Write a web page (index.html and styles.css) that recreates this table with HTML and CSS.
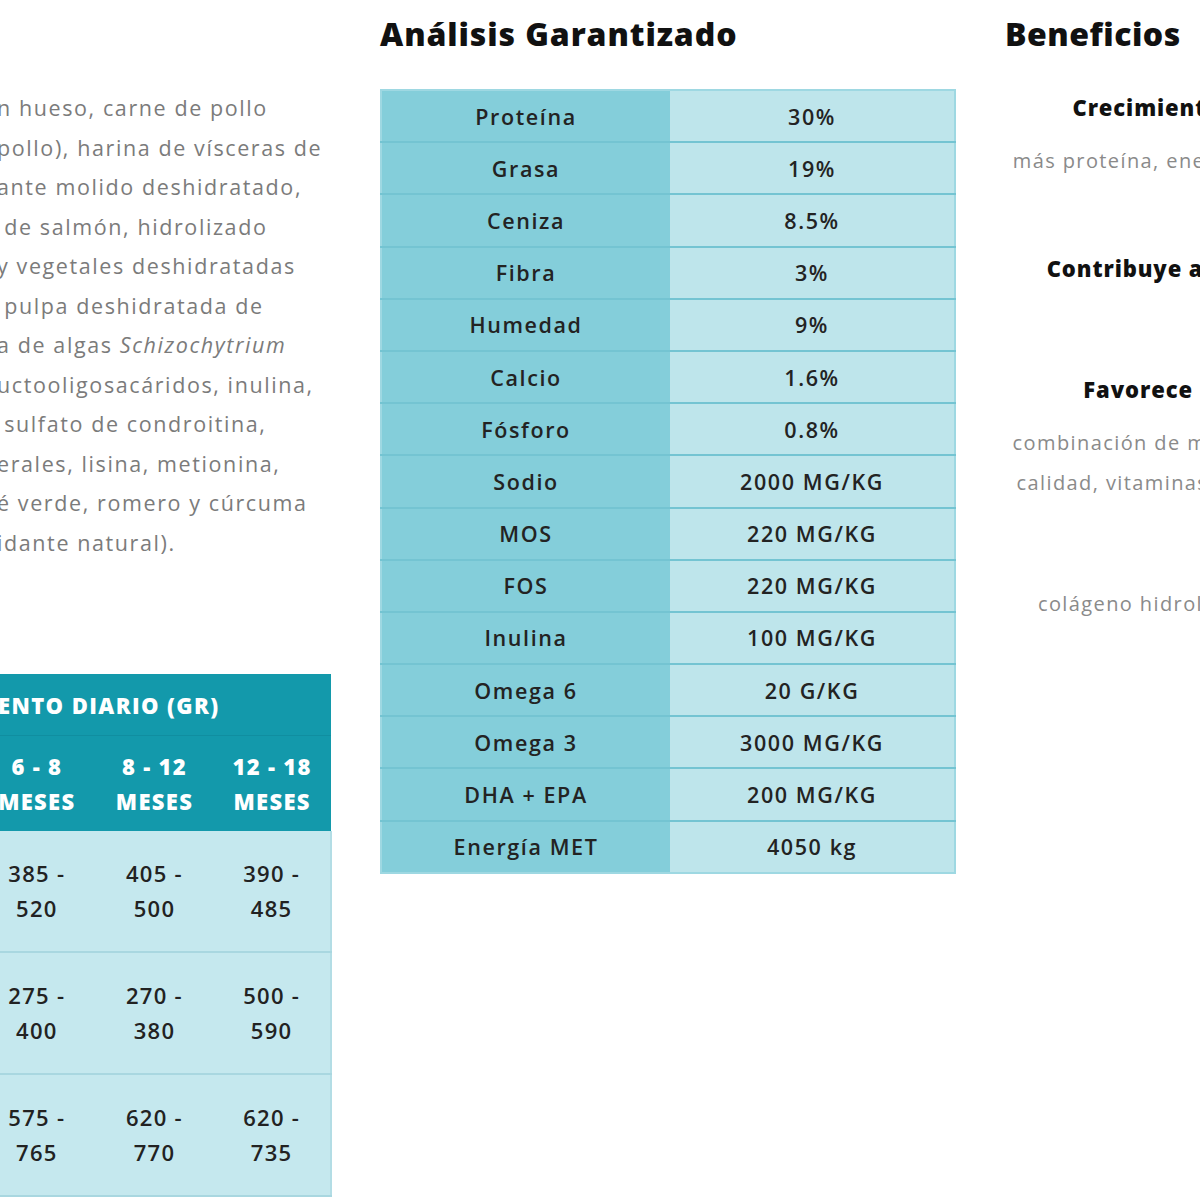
FILE: index.html
```html
<!DOCTYPE html>
<html lang="es">
<head>
<meta charset="utf-8">
<title>Ficha nutricional</title>
<link rel="stylesheet" href="styles.css">
</head>
<body>
<div class="page">
  <section class="col col-ingredients">
    <div class="ingredients">
      <span class="line">n hueso, carne de pollo</span>
      <span class="line">pollo), harina de vísceras de</span>
      <span class="line">ante molido deshidratado,</span>
      <span class="line">&nbsp;de salmón, hidrolizado</span>
      <span class="line">y vegetales deshidratadas</span>
      <span class="line">&nbsp;pulpa deshidratada de</span>
      <span class="line">a de algas <em>Schizochytrium</em></span>
      <span class="line">uctooligosacáridos, inulina,</span>
      <span class="line">&nbsp;sulfato de condroitina,</span>
      <span class="line">erales, lisina, metionina,</span>
      <span class="line">é verde, romero y cúrcuma</span>
      <span class="line">idante natural).</span>
    </div>
    <table class="feed">
      <thead>
        <tr class="feed-title"><th colspan="3"><span>ENTO DIARIO (GR)</span></th></tr>
        <tr class="feed-ages">
          <th>6 - 8<br>MESES</th>
          <th>8 - 12<br>MESES</th>
          <th>12 - 18<br>MESES</th>
        </tr>
      </thead>
      <tbody>
        <tr><td>385 -<br>520</td><td>405 -<br>500</td><td>390 -<br>485</td></tr>
        <tr><td>275 -<br>400</td><td>270 -<br>380</td><td>500 -<br>590</td></tr>
        <tr><td>575 -<br>765</td><td>620 -<br>770</td><td>620 -<br>735</td></tr>
      </tbody>
    </table>
  </section>

  <section class="col col-analysis">
    <h2 class="heading">Análisis Garantizado</h2>
    <table class="analysis">
      <tbody>
        <tr><td>Proteína</td><td>30%</td></tr>
        <tr><td>Grasa</td><td>19%</td></tr>
        <tr><td>Ceniza</td><td>8.5%</td></tr>
        <tr><td>Fibra</td><td>3%</td></tr>
        <tr><td>Humedad</td><td>9%</td></tr>
        <tr><td>Calcio</td><td>1.6%</td></tr>
        <tr><td>Fósforo</td><td>0.8%</td></tr>
        <tr><td>Sodio</td><td>2000 MG/KG</td></tr>
        <tr><td>MOS</td><td>220 MG/KG</td></tr>
        <tr><td>FOS</td><td>220 MG/KG</td></tr>
        <tr><td>Inulina</td><td>100 MG/KG</td></tr>
        <tr><td>Omega 6</td><td>20 G/KG</td></tr>
        <tr><td>Omega 3</td><td>3000 MG/KG</td></tr>
        <tr><td>DHA + EPA</td><td>200 MG/KG</td></tr>
        <tr><td>Energía MET</td><td>4050 kg</td></tr>
      </tbody>
    </table>
  </section>

  <section class="col col-benefits">
    <h2 class="heading">Beneficios</h2>
    <div class="benefits">
      <div class="benefit">
        <h3 class="benefit-title">Crecimiento y desarrollo sano</h3>
        <p class="benefit-text"><span>más proteína, energía y nutrientes esenciales</span><span>su etapa.</span></p>
      </div>
      <div class="benefit">
        <h3 class="benefit-title">Contribuye al desarrollo cognitivo</h3>
        <p class="benefit-text"><span>con DHA.</span></p>
      </div>
      <div class="benefit">
        <h3 class="benefit-title">Favorece huesos y músculos</h3>
        <p class="benefit-text"><span>combinación de minerales y proteínas de alta</span><span>calidad, vitaminas y ácidos grasos esenciales</span></p>
      </div>
      <div class="benefit">
        <h3 class="benefit-title">Pelaje</h3>
        <p class="benefit-text"><span>colágeno hidrolizado y glucosamina para</span></p>
      </div>
    </div>
  </section>
</div>
</body>
</html>
```

FILE: styles.css
```css
html, body {
  margin: 0;
  padding: 0;
  background: #ffffff;
}

body {
  width: 1200px;
  height: 1200px;
  overflow: hidden;
  font-family: "Open Sans", "Liberation Sans", sans-serif;
  color: #222;
}

.page {
  display: flex;
  align-items: flex-start;
  width: 1700px;
}

.col-ingredients {
  width: 354px;
  margin-left: -22px;
  flex: none;
}

.ingredients {
  padding: 88px 0 0 19px;
  font-size: 21.5px;
  line-height: 39.5px;
  letter-spacing: 1.6px;
  color: #7b7b7b;
}

.ingredients .line {
  display: block;
  white-space: nowrap;
}

.ingredients em {
  font-style: italic;
}

.feed {
  margin-top: 112px;
  width: 354px;
  border-collapse: collapse;
  table-layout: fixed;
  font-size: 22px;
  letter-spacing: 1.3px;
}

.feed th {
  color: #ffffff;
  font-weight: 800;
  background: #1399ab;
}

.feed-title th {
  height: 61px;
  text-align: left;
  padding: 0 0 0 20px;
  border-bottom: 1px solid #108ea0;
  letter-spacing: 1.4px;
}

.feed-ages th {
  height: 95px;
  line-height: 35px;
  text-align: center;
  padding: 0;
}

.feed td {
  height: 120px;
  background: #c5e8ee;
  text-align: center;
  line-height: 35px;
  padding: 0;
  color: #222;
  font-weight: 600;
  border-bottom: 2px solid #a9d7e0;
}

.feed tbody tr td:last-child {
  border-right: 2px solid #b3dde5;
}

.col-analysis {
  width: 576px;
  margin-left: 48px;
  flex: none;
}

.heading {
  margin: 0;
  height: 89px;
  padding-top: 14px;
  box-sizing: border-box;
  font-size: 32px;
  line-height: 40px;
  font-weight: 800;
  color: #111;
  letter-spacing: 0.9px;
}

.col-benefits .heading {
  letter-spacing: 0.5px;
}

.analysis {
  width: 576px;
  border-collapse: collapse;
  table-layout: fixed;
  font-size: 21.5px;
  letter-spacing: 1.6px;
  border: 2px solid #9ed8e2;
}

.analysis td {
  height: 50.2px;
  padding: 0;
  text-align: center;
  color: #232323;
  font-weight: 600;
  border-bottom: 2px solid #74c4d2;
}

.analysis tr:last-child td {
  border-bottom: none;
}

.analysis td:first-child {
  width: 288px;
  background: #84ceda;
}

.analysis td:last-child {
  background: #bee5eb;
}

.col-benefits {
  width: 500px;
  margin-left: 49px;
  flex: none;
}

.benefits {
  text-align: center;
}

.benefit + .benefit {
  margin-top: 29px;
}

.benefit-title {
  margin: 0;
  font-size: 22px;
  line-height: 36px;
  font-weight: 800;
  letter-spacing: 0.9px;
  color: #111;
  white-space: nowrap;
}

.benefit-text {
  margin: 0;
  padding-top: 16px;
  font-size: 20px;
  line-height: 40px;
  letter-spacing: 1.4px;
  color: #8a8a8a;
}

.benefit-text span {
  display: block;
  white-space: nowrap;
}
```
